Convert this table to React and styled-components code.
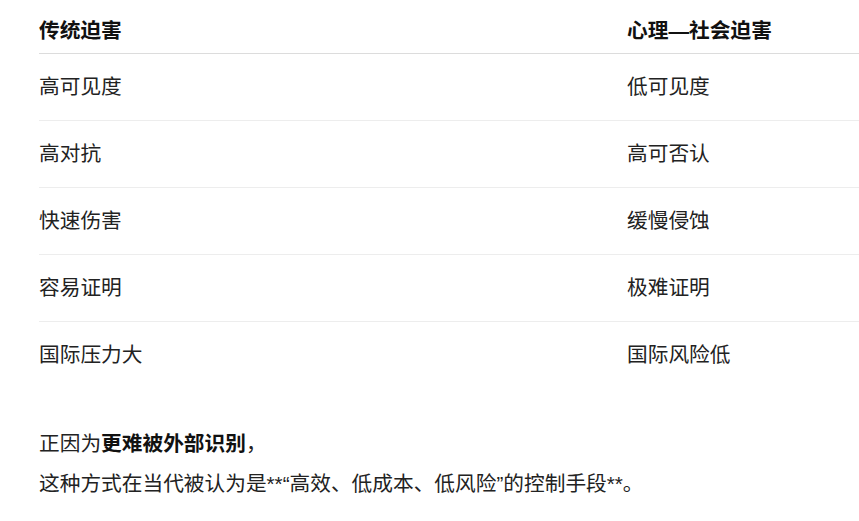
import React from "react";
import styled, { createGlobalStyle } from "styled-components";

const Global = createGlobalStyle`
  html, body {
    margin: 0;
    padding: 0;
    background: #ffffff;
  }
  body {
    font-family: "Liberation Sans", "Noto Sans CJK SC", sans-serif;
    color: #1f1f1f;
  }
`;

const Page = styled.div`
  box-sizing: border-box;
  width: 100%;
  padding: 8px 0 0 39px;
`;

const Table = styled.div`
  display: grid;
  grid-template-columns: 588px 1fr;
  width: 100%;
`;

const Row = styled.div`
  display: grid;
  grid-column: 1 / -1;
  grid-template-columns: subgrid;
  align-items: center;
  height: ${(p) => (p.$head ? "45px" : "66px")};
  border-bottom: ${(p) =>
    p.$last ? "1px solid transparent" : p.$head ? "1px solid #dcdcdc" : "1px solid #ededed"};
`;

const Cell = styled.div`
  font-size: 20.7px;
  line-height: 28px;
  font-weight: ${(p) => (p.$head ? 700 : 400)};
  color: ${(p) => (p.$head ? "#111111" : "#222222")};
  white-space: nowrap;
`;

const Paragraph = styled.p`
  margin: 35px 0 0;
  font-size: 20.7px;
  line-height: 40px;
  color: #222222;
`;

const Strong = styled.strong`
  font-weight: 700;
  color: #111111;
`;

const rows = [
  ["高可见度", "低可见度"],
  ["高对抗", "高可否认"],
  ["快速伤害", "缓慢侵蚀"],
  ["容易证明", "极难证明"],
  ["国际压力大", "国际风险低"],
];

export default function App() {
  return (
    <>
      <Global />
      <Page>
        <Table>
          <Row $head>
            <Cell $head>传统迫害</Cell>
            <Cell $head>心理—社会迫害</Cell>
          </Row>
          {rows.map(([a, b], i) => (
            <Row key={a} $last={i === rows.length - 1}>
              <Cell>{a}</Cell>
              <Cell>{b}</Cell>
            </Row>
          ))}
        </Table>
        <Paragraph>
          正因为<Strong>更难被外部识别</Strong>，
          <br />
          这种方式在当代被认为是**“高效、低成本、低风险”的控制手段**。
        </Paragraph>
      </Page>
    </>
  );
}
